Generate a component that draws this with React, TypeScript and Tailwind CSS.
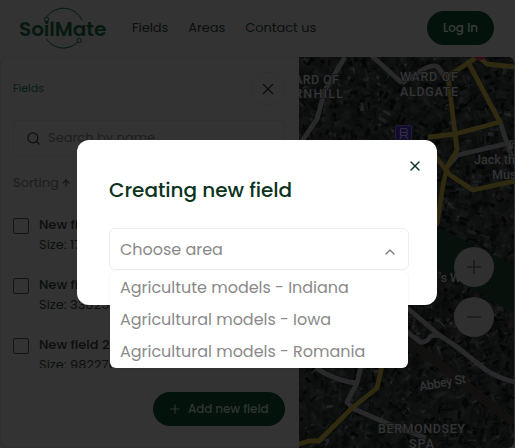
import { ChevronUp, Plus, Search, X, ArrowUp } from "lucide-react";

const fields = [
  { name: "New field 4", size: "Size: 172643" },
  { name: "New field 3", size: "Size: 338252" },
  { name: "New field 2", size: "Size: 982276" },
];

const areas = [
  "Agricultute models - Indiana",
  "Agricultural models - Iowa",
  "Agricultural models - Romania",
];

function random(seed: number) {
  let s = seed;
  return () => {
    s = (s * 1664525 + 1013904223) % 4294967296;
    return s / 4294967296;
  };
}

const roofColors = ["#191b1c", "#050706", "#141716", "#0a0c0a", "#191714", "#222425", "#0d130e", "#17191b", "#070808", "#0c0e0d"];

const buildings = (() => {
  const r = random(7);
  return Array.from({ length: 3200 }, () => {
    const x = r() * 216;
    const y = r() * 392;
    const angle = ((Math.floor((x + 40) / 60) * 37 + Math.floor(y / 70) * 23) % 90) - 45;
    return {
      x,
      y,
      w: 2.5 + r() * 7,
      h: 1 + r() * 3,
      a: angle + (r() > 0.5 ? 90 : 0),
      c: roofColors[Math.floor(r() * roofColors.length)],
    };
  });
})();

const grayRoads = [
  "M345 57L325 90L317 119L302 141",
  "M372 56L402 83",
  "M402 83L424 69Q432 64 438 67L445 77",
  "M500 122L507 143L512 157",
  "M505 144L458 155L447 167",
  "M405 306L439 335L457 347L486 370Q500 379 515 382",
  "M405 330L420 342Q427 343 430 337Q434 334 439 336",
  "M316 368Q336 381 356 383",
  "M361 366L357 383L347 402L352 408L386 423L426 438",
];

const yellowRoads = [
  "M478 56L468 63L448 76L455 133L457 150L447 167L443 185L437 224",
  "M468 62L500 122L455 134L430 137",
  "M480 58L487 64L515 67",
  "M435 156L450 175L473 190L515 181",
  "M382 366L377 388L352 408L319 441L309 441L299 444",
];

function Map() {
  return (
    <svg className="h-[391px] w-[215px] shrink-0 rounded-r-md" viewBox="299 57 215 391">
      <defs>
        <filter id="grain" x="0" y="0" width="100%" height="100%" colorInterpolationFilters="sRGB">
          <feTurbulence type="fractalNoise" baseFrequency="0.1" numOctaves="4" seed="4" />
          <feColorMatrix values="0 0 0 0 0.01  0 0 0 0 0.02  0 0 0 0 0.015  2 0 0 0 -0.7" />
        </filter>
        <clipPath id="river">
          <path d="M437 227L463 240L514 265V313L467 287L437 270Z" />
        </clipPath>
      </defs>
      <rect x="299" y="57" width="216" height="392" fill="#121413" />
      <g transform="translate(299 57)">
        {buildings.map((b, i) => (
          <rect key={i} x={-b.w / 2} y={-b.h / 2} width={b.w} height={b.h} fill={b.c} transform={`translate(${b.x} ${b.y}) rotate(${b.a})`} />
        ))}
      </g>
      <rect x="299" y="57" width="216" height="392" filter="url(#grain)" opacity="0.7" />
      <path d="M437 227L463 240L514 265V313L467 287L437 270Z" fill="#08100b" />
      <g clipPath="url(#river)" stroke="#0d1610" strokeWidth="0.6" strokeDasharray="3 2">
        <path d="M437 252L515 292M437 255L515 295M470 251L515 274M437 262L515 302" />
      </g>
      <path d="M405 337L514 423" stroke="#12100e" strokeWidth="9" />
      <path d="M405 337L514 423M405 333L514 419M405 341L514 427" stroke="#191613" strokeWidth="0.6" fill="none" />
      <g fill="none" stroke="#29292b" strokeWidth="4.8" strokeLinejoin="round">
        {grayRoads.map((d) => (
          <path key={d} d={d} />
        ))}
      </g>
      <g fill="none" stroke="#2f2a10" strokeWidth="4.8" strokeLinejoin="round" strokeLinecap="round">
        {yellowRoads.map((d) => (
          <path key={d} d={d} />
        ))}
      </g>
      <circle cx="480" cy="51" r="9" fill="#350916" />
      <rect x="395.5" y="125.5" width="16" height="17" rx="1" fill="#140c2f" stroke="#211b38" />
      <g fill="none" stroke="#312f3e" strokeWidth="1.2">
        <rect x="400.5" y="128.5" width="6.5" height="7" rx="1" />
        <path d="M400.5 132.5H407M401.5 136L400 139M406 136L407.5 139" />
      </g>
      <g
        fill="#333435"
        stroke="#101112"
        strokeWidth="1.3"
        paintOrder="stroke"
        fontFamily="Roboto, 'Liberation Sans', sans-serif"
        fontWeight="500"
        fontSize="12.5"
      >
        <text x="283" y="84" textLength="56" lengthAdjust="spacing">WARD OF</text>
        <text x="275" y="98" textLength="68" lengthAdjust="spacing">CORNHILL</text>
        <text x="400" y="81" textLength="58" lengthAdjust="spacing">WARD OF</text>
        <text x="400" y="95.5" textLength="58" lengthAdjust="spacing">ALDGATE</text>
        <text x="474" y="164">Jack the</text>
        <text x="492" y="178.5">Muse</text>
        <text x="439" y="282">'s W</text>
        <text x="420" y="391" transform="rotate(-10 420 391)" textLength="47">Abbey St</text>
        <text x="378" y="433" textLength="87" lengthAdjust="spacing">BERMONDSEY</text>
        <text x="409" y="447.5" textLength="25" lengthAdjust="spacing">SPA</text>
      </g>
      <path d="M515 141H510V148H515M512 148V144L514 143" fill="none" stroke="#393a3b" strokeWidth="1.2" />
      <g fill="#2f2f2f">
        <circle cx="474" cy="267" r="20" />
        <circle cx="474" cy="317" r="20" />
      </g>
      <path d="M467 267H481M474 260V274M467 317H481" stroke="#1b1b1b" strokeWidth="1.6" />
    </svg>
  );
}

function Logo() {
  return (
    <div className="relative h-[57px] w-[86px] text-[#05190f]">
      <svg className="absolute left-0 top-0 h-[57px] w-[86px]" viewBox="20 0 86 57" fill="none" stroke="currentColor">
        <path d="M47 16.5A20.4 20.4 0 0 1 82 20.3M46.3 38.8A20.4 20.4 0 0 0 77.6 42.3" />
        <circle cx="46.5" cy="19.3" r="2.1" />
        <circle cx="79.3" cy="40.5" r="2.1" />
      </svg>
      <span className="absolute left-[-1px] top-[15px] text-[20px] font-semibold leading-7 tracking-[-0.05px]">SoilMate</span>
    </div>
  );
}

export default function App() {
  return (
    <div className="relative flex h-[448px] w-[515px] flex-col overflow-hidden bg-[#333333] font-['Poppins','Inter',sans-serif] text-[13px] text-[#0b0f0d]">
      <header className="flex h-[57px] shrink-0 items-center pl-5 pr-[21px]">
        <Logo />
        <nav className="mb-[2px] ml-[26px] flex gap-5 whitespace-nowrap tracking-[-0.05px]">
          <a>Fields</a>
          <a>Areas</a>
          <a>Contact us</a>
        </nav>
        <button className="mb-px ml-auto h-[34px] w-[67px] rounded-full bg-[#03130b] text-[12px] font-medium text-[#383d3a]">Log In</button>
      </header>

      <div className="flex h-[391px] shrink-0">
        <aside className="flex w-[299px] shrink-0 flex-col rounded-l-md border-b border-l border-t border-[#303030] pl-3 pr-3.5 pt-[14px]">
          <div className="flex h-[34px] items-center justify-between">
            <span className="mb-px text-[11px] text-[#071c12]">Fields</span>
            <button className="flex size-[34px] items-center justify-center rounded-full border border-[#303030]">
              <X className="mb-px mr-px size-[18px]" strokeWidth={1.7} />
            </button>
          </div>
          <div className="mt-[14px] flex h-[36px] items-center gap-[7px] rounded border border-[#303030] pl-3 text-[#1e1e1e]">
            <Search className="size-[15px] text-[#0b0f0d]" strokeWidth={1.9} />
            <span>Search by name</span>
          </div>
          <div className="mt-[17px] flex h-5 items-center gap-[2px] text-[#1c1c1c]">
            <span>Sorting</span>
            <ArrowUp className="mb-px size-[10px] text-[#141414]" strokeWidth={2.6} />
          </div>
          <ul className="mt-[22px] flex h-[153px] flex-col overflow-hidden">
            {fields.map((f) => (
              <li key={f.name} className="flex h-[60px] shrink-0 gap-[10px]">
                <span className="mt-[3px] size-4 rounded-[2px] border border-[#141414]" />
                <div className="leading-5">
                  <p className="font-medium">{f.name}</p>
                  <p>{f.size}</p>
                </div>
              </li>
            ))}
          </ul>
          <button className="mt-6 flex h-[34px] w-[132px] shrink-0 items-center gap-[6px] self-end whitespace-nowrap rounded-full bg-[#03130b] pl-[15px] text-[12px] font-medium tracking-[-0.1px] text-[#2f3532]">
            <Plus className="size-[14px]" strokeWidth={2} />
            Add new field
          </button>
        </aside>
        <Map />
        <div className="w-px bg-[#2e2e2e]" />
      </div>

      <div className="absolute left-[77px] top-[140px] h-[165px] w-[360px] rounded-xl bg-white px-8 text-[#0b3320]">
        <button className="absolute right-[14px] top-[18px]">
          <X className="size-4" strokeWidth={2.1} />
        </button>
        <h2 className="pt-[35px] text-[20px] font-medium leading-[30px] tracking-[-0.03px]">Creating new field</h2>
        <div className="relative mt-[23px] text-[16px] tracking-[-0.02px] text-[#8a8a8a]">
          <div className="flex h-[42px] w-[300px] items-center justify-between rounded-md border border-[#eeeeee] pl-[10px] pr-[10px]">
            <span className="mt-[2px]">Choose area</span>
            <ChevronUp className="mt-[6px] size-4 text-[#777777]" strokeWidth={1.9} />
          </div>
          <ul className="absolute left-px top-[43px] w-[298px] rounded-md bg-white pb-px shadow-[0_0_3px_rgba(0,0,0,0.06)]">
            {areas.map((a) => (
              <li key={a} className="flex h-8 items-center pl-[10px] pt-[2px]">{a}</li>
            ))}
          </ul>
        </div>
      </div>
    </div>
  );
}
